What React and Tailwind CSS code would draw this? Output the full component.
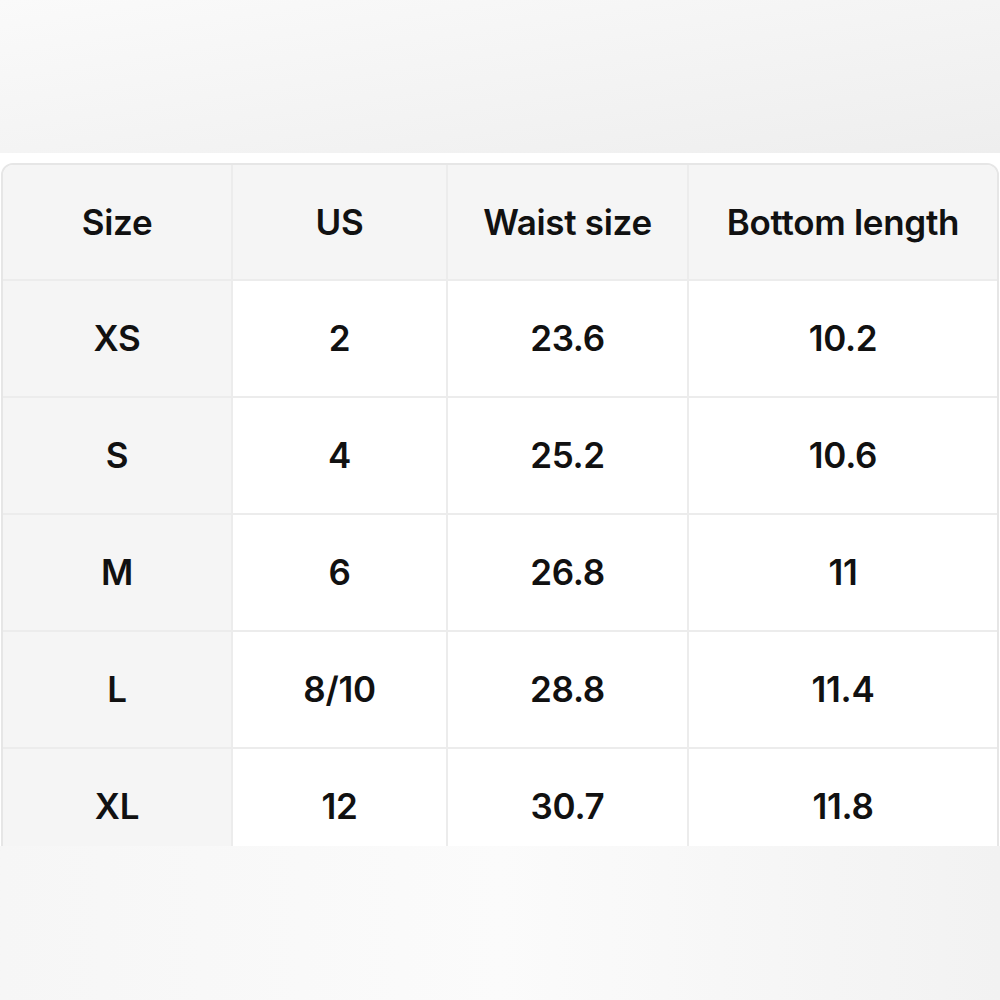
import React from 'react';

const rows = [
  ['XS', '2', '23.6', '10.2'],
  ['S', '4', '25.2', '10.6'],
  ['M', '6', '26.8', '11'],
  ['L', '8/10', '28.8', '11.4'],
  ['XL', '12', '30.7', '11.8'],
];

const headers = ['Size', 'US', 'Waist size', 'Bottom length'];

export default function App() {
  return (
    <div className="w-[1000px] h-[1000px] flex flex-col bg-white overflow-hidden" style={{ fontFamily: 'Inter, "Liberation Sans", sans-serif' }}>
      <div className="h-[153px] bg-gradient-to-br from-[#fafafa] via-[#f4f4f4] to-[#eeeeee]" />
      <div className="h-[10px] bg-white" />

      <div className="h-[683px] overflow-hidden px-px">
        <div className="border-2 border-[#e6e6e6] rounded-t-[12px] overflow-hidden">
          <div className="grid grid-cols-[230px_215px_241px_1fr] text-[#111] font-semibold text-[35px] tracking-[-0.3px]">
            {headers.map((h, i) => (
              <div
                key={h}
                className={`h-[116px] flex items-center justify-center bg-[#f5f5f5] border-b-2 border-[#ececec] ${i < 3 ? 'border-r-2' : ''}`}
              >
                {h}
              </div>
            ))}
            {rows.map((r) =>
              r.map((c, i) => (
                <div
                  key={r[0] + i}
                  className={`h-[117px] flex items-center justify-center border-b-2 border-[#ececec] ${i === 0 ? 'bg-[#f5f5f5]' : 'bg-white'} ${i < 3 ? 'border-r-2' : ''}`}
                >
                  {c}
                </div>
              ))
            )}
          </div>
        </div>
      </div>

      <div className="flex-1 bg-gradient-to-r from-[#f6f6f6] via-[#fbfbfb] to-[#f2f2f2]" />
    </div>
  );
}
